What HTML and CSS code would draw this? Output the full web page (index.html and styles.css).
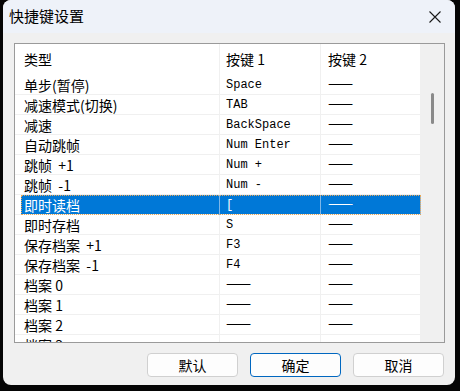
FILE: index.html
```html
<!DOCTYPE html>
<html>
<head>
  <meta charset="utf-8">
  <title>快捷键设置</title>
  <link rel="stylesheet" href="styles.css">
</head>
<body>
  <div class="window">
    <div class="titlebar">
      <span class="title">快捷键设置</span>
      <svg class="close" width="12" height="12" viewBox="0 0 12 12">
        <path d="M0.5 0.5 L11.5 11.5 M11.5 0.5 L0.5 11.5" stroke="#1a1a1a" stroke-width="1.1" fill="none"/>
      </svg>
    </div>

    <div class="content">
      <div class="list">
        <div class="table">
          <div class="row head">
            <div class="cell c1">类型</div>
            <div class="cell c2">按键 1</div>
            <div class="cell c3">按键 2</div>
          </div>
          <div class="row"><div class="cell c1">单步(暂停)</div><div class="cell c2 key">Space</div><div class="cell c3 dash">——</div></div>
          <div class="row"><div class="cell c1">减速模式(切换)</div><div class="cell c2 key">TAB</div><div class="cell c3 dash">——</div></div>
          <div class="row"><div class="cell c1">减速</div><div class="cell c2 key">BackSpace</div><div class="cell c3 dash">——</div></div>
          <div class="row"><div class="cell c1">自动跳帧</div><div class="cell c2 key">Num Enter</div><div class="cell c3 dash">——</div></div>
          <div class="row"><div class="cell c1">跳帧&nbsp; +1</div><div class="cell c2 key">Num +</div><div class="cell c3 dash">——</div></div>
          <div class="row"><div class="cell c1">跳帧&nbsp; -1</div><div class="cell c2 key">Num -</div><div class="cell c3 dash">——</div></div>
          <div class="row sel"><div class="cell c1">即时读档</div><div class="cell c2 key">[</div><div class="cell c3 dash">——</div></div>
          <div class="row"><div class="cell c1">即时存档</div><div class="cell c2 key">S</div><div class="cell c3 dash">——</div></div>
          <div class="row"><div class="cell c1">保存档案&nbsp; +1</div><div class="cell c2 key">F3</div><div class="cell c3 dash">——</div></div>
          <div class="row"><div class="cell c1">保存档案&nbsp; -1</div><div class="cell c2 key">F4</div><div class="cell c3 dash">——</div></div>
          <div class="row"><div class="cell c1">档案 0</div><div class="cell c2 dash">——</div><div class="cell c3 dash">——</div></div>
          <div class="row"><div class="cell c1">档案 1</div><div class="cell c2 dash">——</div><div class="cell c3 dash">——</div></div>
          <div class="row"><div class="cell c1">档案 2</div><div class="cell c2 dash">——</div><div class="cell c3 dash">——</div></div>
          <div class="row"><div class="cell c1">档案 3</div><div class="cell c2 dash">——</div><div class="cell c3 dash">——</div></div>
        </div>
        <div class="scrollbar">
          <div class="thumb"></div>
        </div>
      </div>

      <div class="buttons">
        <button class="btn">默认</button>
        <button class="btn default">确定</button>
        <button class="btn">取消</button>
      </div>
    </div>
  </div>
</body>
</html>
```

FILE: styles.css
```css
/* 快捷键设置 对话框 */
body {
  margin: 0;
  background: #050505;
  font-family: "Noto Sans CJK SC", "Noto Sans", sans-serif;
  color: #000;
}
.window {
  margin-left: 3px;
  width: 452px;
  height: 385px;
  background: #f0f0f0;
  border-radius: 8px;
  overflow: hidden;
  display: flex;
  flex-direction: column;
}
.titlebar {
  height: 33px;
  flex: none;
  background: #eef2f9;
  display: flex;
  align-items: center;
  justify-content: space-between;
  padding: 0 14px 0 6px;
}
.title {
  font-size: 15px;
  line-height: 20px;
  margin-top: -1px;
}
.close {
  display: block;
  margin-top: 1px;
}
.content {
  padding: 10px 10px 0 11px;
}
.list {
  height: 298px;
  border: 1px solid #9a9a9a;
  background: #fff;
  display: flex;
  overflow: hidden;
}
.table {
  width: 406px;
  flex: none;
  overflow: hidden;
}
.row {
  display: grid;
  grid-template-columns: 205px 101px 100px;
  height: 20px;
  border-bottom: 1px solid #f0f0f0;
  box-sizing: border-box;
  font-size: 14px;
  line-height: 19px;
  position: relative;
}
.row.head {
  height: 31px;
  border-bottom: none;
  font-size: 14px;
}
.cell {
  border-right: 1px solid #f0f0f0;
  display: flex;
  align-items: center;
  white-space: nowrap;
}
.c1 { padding-left: 9px; }
.c2 { padding-left: 6px; }
.c3 { padding-left: 7px; }
.key {
  font-family: "Liberation Mono", monospace;
  font-size: 12px;
}
.dash {
  font-size: 15px;
  line-height: 15px;
  letter-spacing: 1px;
  padding-bottom: 5px;
}
.row.sel {
  background: linear-gradient(to right, #fff 6px, #0078d7 6px);
  color: #fff;
}
.row.sel .cell {
  border-right-color: #7db6e8;
}
.row.sel::after {
  content: "";
  position: absolute;
  left: 6px;
  right: 0;
  top: 0;
  bottom: -1px;
  border: 1px dotted #e6a85a;
}
.scrollbar {
  flex: 1;
  background: #f0f0f0;
  padding-top: 49px;
}
.thumb {
  width: 3px;
  height: 31px;
  margin-left: 10px;
  background: #8a8a8a;
  border-radius: 2px;
}
.buttons {
  display: flex;
  justify-content: flex-end;
  gap: 12px;
  margin-top: 10px;
  padding-right: 1px;
}
.btn {
  width: 91px;
  height: 24px;
  border: 1px solid #d0d0d0;
  border-radius: 4px;
  background: #fdfdfd;
  font-family: "Noto Sans CJK SC", sans-serif;
  font-size: 14px;
  padding: 0;
  color: #000;
}
.btn.default {
  border-color: #0067c0;
}
```
